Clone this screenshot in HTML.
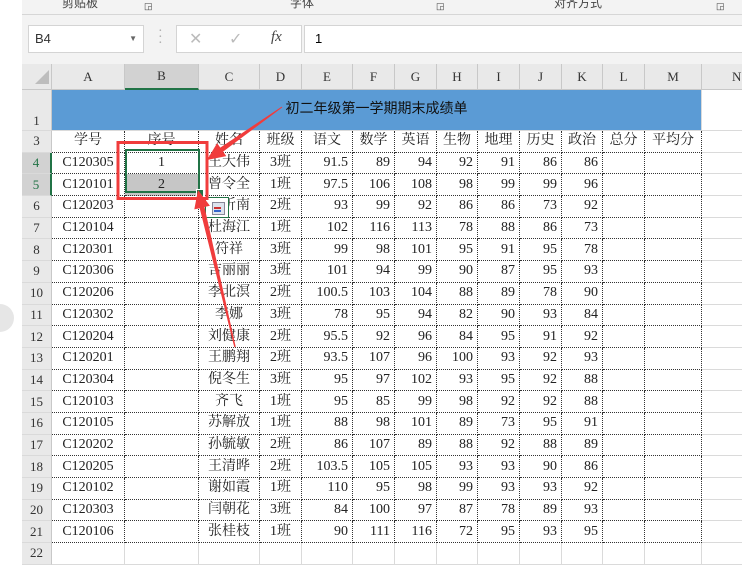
<!DOCTYPE html>
<html><head><meta charset="utf-8"><style>
body{margin:0;width:742px;height:566px;overflow:hidden;background:#fff;position:relative;font-family:"Liberation Serif","Noto Serif CJK SC",serif;}
.rib{position:absolute;left:22px;top:0;width:720px;height:14px;background:#f3f3f3;border-bottom:1px solid #d6d6d6;font-family:"Liberation Sans","Noto Sans CJK SC",sans-serif;font-size:12px;color:#444;}
.rib span{position:absolute;top:-6px}
.fb{position:absolute;left:22px;top:15px;width:720px;height:49px;background:#f3f3f3;}
.nb{position:absolute;left:6px;top:10px;width:114px;height:26px;background:#fff;border:1px solid #d4d4d4;font-family:"Liberation Sans",sans-serif;font-size:13px;line-height:26px;color:#333;}
.fx{position:absolute;left:154px;top:10px;width:124px;height:26px;background:#fff;border:1px solid #d4d4d4;color:#bbb;font-family:"Liberation Sans",sans-serif;}
.fi{position:absolute;left:282px;top:10px;width:440px;height:26px;background:#fff;border:1px solid #d4d4d4;font-family:"Liberation Sans",sans-serif;font-size:13px;line-height:26px;}
table{position:absolute;left:22px;top:64px;width:720px;border-collapse:separate;border-spacing:0;table-layout:fixed;font-size:14px;color:#222;}
td{padding:0;border-right:1px solid #dadada;border-bottom:1px solid #dadada;height:21.7px;line-height:18px;white-space:nowrap;overflow:hidden;box-sizing:border-box;text-align:center;}
tr.h td{background:#e9e9e9;height:22px;border-color:#c8c8c8;font-size:13px;color:#333;}
td.r{background:#e9e9e9;border-right:1px solid #c8c8c8;font-size:13px;color:#333;}
td.d{border-right:1px dotted #333;border-bottom:1px dotted #333;}
td.n{text-align:right;padding-right:4px;}
</style></head><body>
<div style="position:absolute;left:-14px;top:304px;width:28px;height:28px;border-radius:50%;background:#e6e6e6"></div>
<div class="rib"><span style="left:40px">剪贴板</span><span style="left:122px;font-size:9px;top:1px">◲</span><span style="left:268px">字体</span><span style="left:414px;font-size:9px;top:1px">◲</span><span style="left:532px">对齐方式</span><span style="left:694px;font-size:9px;top:1px">◲</span></div>
<div class="fb">
<div class="nb"><span style="margin-left:6px">B4</span><span style="position:absolute;right:6px;font-size:8px;color:#666">▼</span></div>
<div style="position:absolute;left:136px;top:14px;color:#aaa;font-size:14px;line-height:6px">·<br>·<br>·</div>
<div class="fx"><span style="position:absolute;left:12px;top:3px;font-size:16px">✕</span><span style="position:absolute;left:52px;top:3px;font-size:16px">✓</span><span style="position:absolute;left:94px;top:3px;font-size:15px;color:#444;font-family:'Liberation Serif',serif;font-style:italic">fx</span></div>
<div class="fi"><span style="margin-left:10px">1</span></div>
</div>
<table>
<colgroup><col style="width:30px"><col style="width:73px"><col style="width:74px"><col style="width:61px"><col style="width:42px"><col style="width:51px"><col style="width:42px"><col style="width:42px"><col style="width:41px"><col style="width:42px"><col style="width:42px"><col style="width:41px"><col style="width:42px"><col style="width:57px"><col style="width:80px"></colgroup>
<tr class="h"><td style="background:#e9e9e9"><svg width="16" height="14" style="margin:6px 0 0 8px"><polygon points="16,0 16,14 2,14" fill="#bdbdbd"/></svg></td><td>A</td><td style="background:#d2d2d2;border-bottom:2px solid #217346">B</td><td>C</td><td>D</td><td>E</td><td>F</td><td>G</td><td>H</td><td>I</td><td>J</td><td>K</td><td>L</td><td>M</td><td style="text-align:left;text-indent:30px">N</td></tr>
<tr><td class="r" style="height:41px;vertical-align:bottom">1</td><td colspan="13" style="background:#5b9bd5;height:41px;font-family:'Liberation Sans','Noto Sans CJK SC',sans-serif;font-size:14px;color:#111;padding-bottom:4px">初二年级第一学期期末成绩单</td><td></td></tr>
<tr><td class="r">3</td><td class="d">学号</td><td class="d">序号</td><td class="d">姓名</td><td class="d">班级</td><td class="d">语文</td><td class="d">数学</td><td class="d">英语</td><td class="d">生物</td><td class="d">地理</td><td class="d">历史</td><td class="d">政治</td><td class="d">总分</td><td class="d">平均分</td><td></td></tr>
<tr><td class="r" style="background:#d2d2d2;border-right:2px solid #217346;color:#217346">4</td><td class="d">C120305</td><td class="d">1</td><td class="d">王大伟</td><td class="d">3班</td><td class="d n">91.5</td><td class="d n">89</td><td class="d n">94</td><td class="d n">92</td><td class="d n">91</td><td class="d n">86</td><td class="d n">86</td><td class="d"></td><td class="d"></td><td></td></tr>
<tr><td class="r" style="background:#d2d2d2;border-right:2px solid #217346;color:#217346">5</td><td class="d">C120101</td><td class="d" style="background:#c6c6c6">2</td><td class="d">曾令全</td><td class="d">1班</td><td class="d n">97.5</td><td class="d n">106</td><td class="d n">108</td><td class="d n">98</td><td class="d n">99</td><td class="d n">99</td><td class="d n">96</td><td class="d"></td><td class="d"></td><td></td></tr>
<tr><td class="r">6</td><td class="d">C120203</td><td class="d"></td><td class="d">陈昕南</td><td class="d">2班</td><td class="d n">93</td><td class="d n">99</td><td class="d n">92</td><td class="d n">86</td><td class="d n">86</td><td class="d n">73</td><td class="d n">92</td><td class="d"></td><td class="d"></td><td></td></tr>
<tr><td class="r">7</td><td class="d">C120104</td><td class="d"></td><td class="d">杜海江</td><td class="d">1班</td><td class="d n">102</td><td class="d n">116</td><td class="d n">113</td><td class="d n">78</td><td class="d n">88</td><td class="d n">86</td><td class="d n">73</td><td class="d"></td><td class="d"></td><td></td></tr>
<tr><td class="r">8</td><td class="d">C120301</td><td class="d"></td><td class="d">符祥</td><td class="d">3班</td><td class="d n">99</td><td class="d n">98</td><td class="d n">101</td><td class="d n">95</td><td class="d n">91</td><td class="d n">95</td><td class="d n">78</td><td class="d"></td><td class="d"></td><td></td></tr>
<tr><td class="r">9</td><td class="d">C120306</td><td class="d"></td><td class="d">吉丽丽</td><td class="d">3班</td><td class="d n">101</td><td class="d n">94</td><td class="d n">99</td><td class="d n">90</td><td class="d n">87</td><td class="d n">95</td><td class="d n">93</td><td class="d"></td><td class="d"></td><td></td></tr>
<tr><td class="r">10</td><td class="d">C120206</td><td class="d"></td><td class="d">李北溟</td><td class="d">2班</td><td class="d n">100.5</td><td class="d n">103</td><td class="d n">104</td><td class="d n">88</td><td class="d n">89</td><td class="d n">78</td><td class="d n">90</td><td class="d"></td><td class="d"></td><td></td></tr>
<tr><td class="r">11</td><td class="d">C120302</td><td class="d"></td><td class="d">李娜</td><td class="d">3班</td><td class="d n">78</td><td class="d n">95</td><td class="d n">94</td><td class="d n">82</td><td class="d n">90</td><td class="d n">93</td><td class="d n">84</td><td class="d"></td><td class="d"></td><td></td></tr>
<tr><td class="r">12</td><td class="d">C120204</td><td class="d"></td><td class="d">刘健康</td><td class="d">2班</td><td class="d n">95.5</td><td class="d n">92</td><td class="d n">96</td><td class="d n">84</td><td class="d n">95</td><td class="d n">91</td><td class="d n">92</td><td class="d"></td><td class="d"></td><td></td></tr>
<tr><td class="r">13</td><td class="d">C120201</td><td class="d"></td><td class="d">王鹏翔</td><td class="d">2班</td><td class="d n">93.5</td><td class="d n">107</td><td class="d n">96</td><td class="d n">100</td><td class="d n">93</td><td class="d n">92</td><td class="d n">93</td><td class="d"></td><td class="d"></td><td></td></tr>
<tr><td class="r">14</td><td class="d">C120304</td><td class="d"></td><td class="d">倪冬生</td><td class="d">3班</td><td class="d n">95</td><td class="d n">97</td><td class="d n">102</td><td class="d n">93</td><td class="d n">95</td><td class="d n">92</td><td class="d n">88</td><td class="d"></td><td class="d"></td><td></td></tr>
<tr><td class="r">15</td><td class="d">C120103</td><td class="d"></td><td class="d">齐飞</td><td class="d">1班</td><td class="d n">95</td><td class="d n">85</td><td class="d n">99</td><td class="d n">98</td><td class="d n">92</td><td class="d n">92</td><td class="d n">88</td><td class="d"></td><td class="d"></td><td></td></tr>
<tr><td class="r">16</td><td class="d">C120105</td><td class="d"></td><td class="d">苏解放</td><td class="d">1班</td><td class="d n">88</td><td class="d n">98</td><td class="d n">101</td><td class="d n">89</td><td class="d n">73</td><td class="d n">95</td><td class="d n">91</td><td class="d"></td><td class="d"></td><td></td></tr>
<tr><td class="r">17</td><td class="d">C120202</td><td class="d"></td><td class="d">孙毓敏</td><td class="d">2班</td><td class="d n">86</td><td class="d n">107</td><td class="d n">89</td><td class="d n">88</td><td class="d n">92</td><td class="d n">88</td><td class="d n">89</td><td class="d"></td><td class="d"></td><td></td></tr>
<tr><td class="r">18</td><td class="d">C120205</td><td class="d"></td><td class="d">王清晔</td><td class="d">2班</td><td class="d n">103.5</td><td class="d n">105</td><td class="d n">105</td><td class="d n">93</td><td class="d n">93</td><td class="d n">90</td><td class="d n">86</td><td class="d"></td><td class="d"></td><td></td></tr>
<tr><td class="r">19</td><td class="d">C120102</td><td class="d"></td><td class="d">谢如霞</td><td class="d">1班</td><td class="d n">110</td><td class="d n">95</td><td class="d n">98</td><td class="d n">99</td><td class="d n">93</td><td class="d n">93</td><td class="d n">92</td><td class="d"></td><td class="d"></td><td></td></tr>
<tr><td class="r">20</td><td class="d">C120303</td><td class="d"></td><td class="d">闫朝花</td><td class="d">3班</td><td class="d n">84</td><td class="d n">100</td><td class="d n">97</td><td class="d n">87</td><td class="d n">78</td><td class="d n">89</td><td class="d n">93</td><td class="d"></td><td class="d"></td><td></td></tr>
<tr><td class="r">21</td><td class="d">C120106</td><td class="d"></td><td class="d">张桂枝</td><td class="d">1班</td><td class="d n">90</td><td class="d n">111</td><td class="d n">116</td><td class="d n">72</td><td class="d n">95</td><td class="d n">93</td><td class="d n">95</td><td class="d"></td><td class="d"></td><td></td></tr>
<tr><td class="r">22</td><td></td><td></td><td></td><td></td><td></td><td></td><td></td><td></td><td></td><td></td><td></td><td></td><td></td><td></td></tr>
</table>
<div style="position:absolute;left:125px;top:149px;width:71px;height:40px;border:2px solid #217346"></div>
<div style="position:absolute;left:196px;top:189px;width:6px;height:6px;background:#217346;border:1px solid #fff"></div>
<div style="position:absolute;left:205px;top:197px;width:22px;height:19px;border:1px solid #217346;background:#fff"><div style="position:absolute;left:6px;top:4px;width:11px;height:11px;background:#dde4ee;border:1px solid #889"></div><div style="position:absolute;left:8px;top:9px;width:7px;height:2px;background:#c33"></div><div style="position:absolute;left:8px;top:12px;width:7px;height:2px;background:#36c"></div></div>
<svg width="742" height="566" style="position:absolute;left:0;top:0">
<rect x="118" y="142.5" width="89" height="56" fill="none" stroke="#f03c3c" stroke-width="3"/>
<polygon points="282.3,107.4 223.1,151.6 226.3,156.1 207,160 217.1,143.1 220.3,147.6 281.7,106.6" fill="#f03c3c"/>
<polygon points="235.7,346.8 204.5,207 209.9,205.8 198,190 194.3,209.4 199.7,208.2 234.3,347.2" fill="#f03c3c"/>
</svg>
</body></html>
